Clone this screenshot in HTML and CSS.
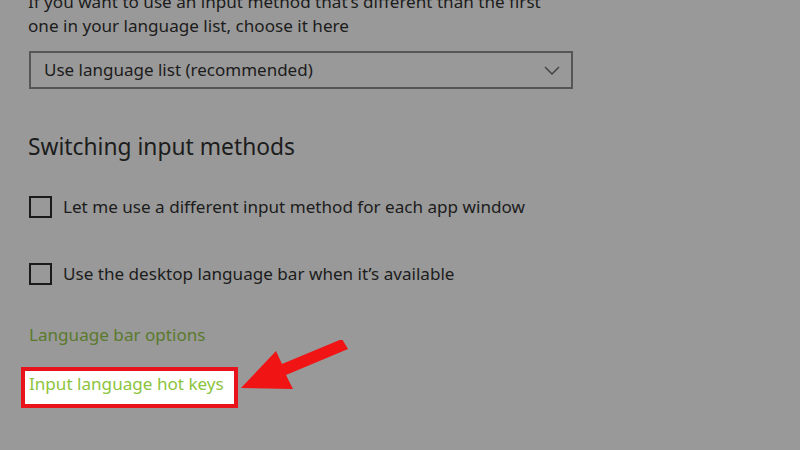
FILE: index.html
```html
<!DOCTYPE html>
<html lang="en">
<head>
<meta charset="utf-8">
<title>Switching input methods</title>
<link rel="stylesheet" href="styles.css">
</head>
<body>
<main class="page">
  <p class="desc">If you want to use an input method that’s different than the first<br>one in your language list, choose it here</p>
  <div class="select">
    <span class="select-text">Use language list (recommended)</span>
    <svg class="chevron" width="16" height="9" viewBox="0 0 16 9"><path d="M1 1 L8 8 L15 1" fill="none" stroke="#444" stroke-width="1.5"/></svg>
  </div>
  <h2 class="heading">Switching input methods</h2>
  <label class="check"><span class="box"></span><span class="check-text">Let me use a different input method for each app window</span></label>
  <label class="check check-second"><span class="box"></span><span class="check-text">Use the desktop language bar when it’s available</span></label>
  <a class="link link-dim">Language bar options</a>
  <div class="hot-row">
    <a class="link link-hot">Input language hot keys</a>
  </div>
  <svg class="arrow" width="120" height="60" viewBox="0 0 120 60">
    <polygon points="1,48 36,11 42,24 102,-1 108,9 46,35 53,49" fill="#f01414"/>
  </svg>
</main>
</body>
</html>
```

FILE: styles.css
```css
html, body {
  margin: 0;
  padding: 0;
  width: 800px;
  height: 450px;
  overflow: hidden;
  background: #999999;
}

.page {
  position: relative;
  display: flex;
  flex-direction: column;
  align-items: flex-start;
  padding-left: 28px;
  font-family: "Noto Sans", "Open Sans", sans-serif;
  color: #1c1c1c;
}

.desc {
  margin: -10px 0 0 0;
  font-size: 17.1px;
  line-height: 24px;
}

.select {
  margin-top: 13px;
  margin-left: 1px;
  box-sizing: border-box;
  width: 544px;
  height: 38px;
  border: 2px solid #565656;
  display: flex;
  align-items: center;
  justify-content: space-between;
  padding: 0 11px 0 13px;
}

.select-text {
  font-size: 17px;
  line-height: 24px;
}

.heading {
  margin: 43px 0 0 0;
  font-size: 22.8px;
  font-weight: 400;
  line-height: 30px;
}

.check {
  display: flex;
  align-items: center;
  gap: 11px;
  margin-top: 34px;
  margin-left: 1px;
  font-size: 17.1px;
  line-height: 22px;
}

.check-second {
  margin-top: 45px;
}

.box {
  box-sizing: border-box;
  width: 23px;
  height: 22px;
  border: 2px solid #1a1a1a;
}

.link {
  font-size: 17.1px;
  line-height: 24px;
  text-decoration: none;
}

.link-dim {
  margin-top: 38px;
  margin-left: 1px;
  color: #5b7a2c;
}

.hot-row {
  margin-top: 20px;
  margin-left: -7px;
  background: #ffffff;
  border: 4px solid #e8131b;
  padding: 1px 10px 8px 4px;
}

.link-hot {
  display: block;
  color: #8cc43c;
}

.arrow {
  position: absolute;
  left: 240px;
  top: 340px;
}
```
